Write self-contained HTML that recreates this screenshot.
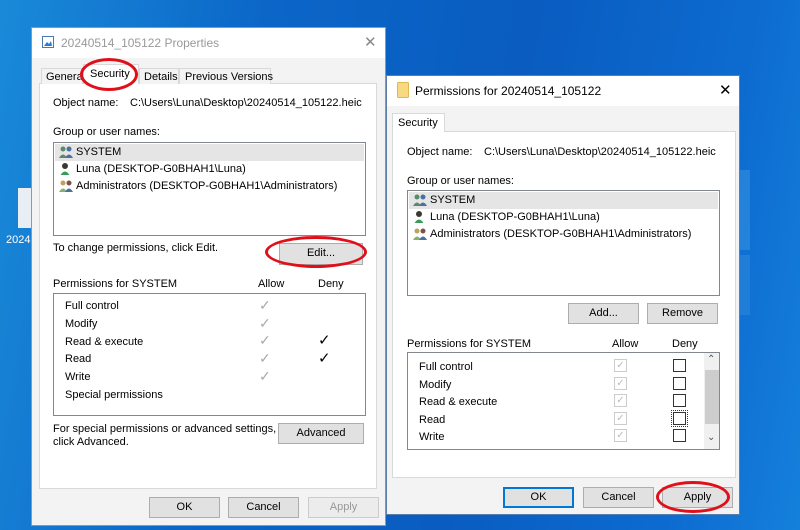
<!DOCTYPE html>
<html><head><style>
*{margin:0;padding:0;box-sizing:border-box}
body{width:800px;height:530px;overflow:hidden;position:relative;font-family:"Liberation Sans",sans-serif;font-size:11px;color:#000;
background:linear-gradient(100deg,#1a8ad8 0%,#0b66c8 30%,#0a5cc0 60%,#0d6bd0 85%,#1580dc 100%)}
.a{position:absolute;white-space:nowrap}
.win{position:absolute;background:#f3f3f3;border:1px solid #7a9cc0}
.tb{position:absolute;left:0;right:0;top:0;background:#fff}
.panel{position:absolute;background:#fff;border:1px solid #d9d9d9}
.list{position:absolute;background:#fff;border:1px solid #828790}
.btn{position:absolute;background:#e1e1e1;border:1px solid #adadad;text-align:center;line-height:19px}
.ell{position:absolute;border:3px solid #e0101a;border-radius:50%}
.ck{position:absolute;width:13px;height:13px;border:1px solid #333;background:#fff}
.gk{position:absolute;width:13px;height:13px;border:1px solid #ccc;background:#fff;color:#bbb;font-size:10px;line-height:11px;text-align:center}
.ico{position:absolute;width:14px;height:12px}
</style></head><body>
<div class="a" style="left:18px;top:188px;width:14px;height:40px;background:#e8eef4"></div>
<div class="a" style="left:6px;top:234px;color:#fff;font-size:11px">2024</div>
<div class="a" style="left:740px;top:170px;width:10px;height:80px;background:#3a96e4;opacity:.5"></div>
<div class="a" style="left:740px;top:255px;width:10px;height:60px;background:#3a92e0;opacity:.4"></div>

<!-- Window 1 -->
<div class="win" style="left:31px;top:27px;width:355px;height:499px">
 <div class="tb" style="height:30px"></div>
 <svg class="a" style="left:10px;top:8px" width="12" height="12"><rect x="0.5" y="0.5" width="11" height="11" fill="#fff" stroke="#4a7ab0"/><path d="M2 10 L5 6 L7 8 L9 5 L10 10Z" fill="#2a7ad0"/></svg>
 <div class="a" style="left:29px;top:8px;color:#999;font-size:12px">20240514_105122 Properties</div>
 <div class="a" style="left:332px;top:5px;color:#888;font-size:15px">✕</div>
 <div class="panel" style="left:7px;top:55px;width:338px;height:406px"></div>
 <div class="a" style="left:9px;top:40px;width:42px;height:16px;border:1px solid #d9d9d9;border-bottom:none;background:#f3f3f3;padding:2px 4px">General</div>
 <div class="a" style="left:51px;top:36px;width:56px;height:20px;border:1px solid #d9d9d9;border-bottom:none;background:#fff;padding:3px 6px">Security</div>
 <div class="a" style="left:107px;top:40px;width:40px;height:16px;border:1px solid #d9d9d9;border-bottom:none;background:#f3f3f3;padding:2px 4px">Details</div>
 <div class="a" style="left:147px;top:40px;width:92px;height:16px;border:1px solid #d9d9d9;border-bottom:none;background:#f3f3f3;padding:2px 5px">Previous Versions</div>
 <div class="a" style="left:21px;top:69px">Object name:</div>
 <div class="a" style="left:98px;top:69px">C:\Users\Luna\Desktop\20240514_105122.heic</div>
 <div class="a" style="left:21px;top:98px">Group or user names:</div>
 <div class="list" style="left:21px;top:114px;width:313px;height:94px">
  <div class="a" style="left:1px;top:1px;width:309px;height:17px;background:#e5e5e5"></div>
  <svg class="ico" style="left:5px;top:3px"><circle cx="4" cy="3" r="2.5" fill="#5a8a6a"/><path d="M0 12 Q4 5 8 12Z" fill="#5a8a6a"/><circle cx="10" cy="3" r="2.5" fill="#4a70a0"/><path d="M6 12 Q10 5 14 12Z" fill="#4a70a0"/></svg>
  <div class="a" style="left:22px;top:3px">SYSTEM</div>
  <svg class="ico" style="left:5px;top:20px"><circle cx="6" cy="3" r="3" fill="#3a3a30"/><path d="M1 13 Q6 4 11 13Z" fill="#3a9a5a"/></svg>
  <div class="a" style="left:22px;top:20px">Luna (DESKTOP-G0BHAH1\Luna)</div>
  <svg class="ico" style="left:5px;top:37px"><circle cx="4" cy="3" r="2.5" fill="#c0a060"/><path d="M0 12 Q4 5 8 12Z" fill="#8ab070"/><circle cx="10" cy="3" r="2.5" fill="#805040"/><path d="M6 12 Q10 5 14 12Z" fill="#4a70a0"/></svg>
  <div class="a" style="left:22px;top:37px">Administrators (DESKTOP-G0BHAH1\Administrators)</div>
 </div>
 <div class="a" style="left:21px;top:214px">To change permissions, click Edit.</div>
 <div class="btn" style="left:247px;top:215px;width:84px;height:22px">Edit...</div>
 <div class="a" style="left:21px;top:250px">Permissions for SYSTEM</div>
 <div class="a" style="left:226px;top:250px">Allow</div>
 <div class="a" style="left:286px;top:250px">Deny</div>
 <div class="list" style="left:21px;top:265px;width:313px;height:123px">
  <div class="a" style="left:11px;top:6px">Full control</div>
  <div class="a" style="left:11px;top:24px">Modify</div>
  <div class="a" style="left:11px;top:42px">Read &amp; execute</div>
  <div class="a" style="left:11px;top:59px">Read</div>
  <div class="a" style="left:11px;top:77px">Write</div>
  <div class="a" style="left:11px;top:95px">Special permissions</div>
  <div class="a" style="left:205px;top:3px;color:#aaa;font-size:14px;line-height:17.7px">✓<br>✓<br>✓<br>✓<br>✓</div>
  <div class="a" style="left:264px;top:38px;color:#000;font-size:15px;line-height:17.7px">✓<br>✓</div>
 </div>
 <div class="a" style="left:21px;top:395px;line-height:13px">For special permissions or advanced settings,<br>click Advanced.</div>
 <div class="btn" style="left:246px;top:395px;width:86px;height:21px">Advanced</div>
 <div class="btn" style="left:117px;top:469px;width:71px;height:21px">OK</div>
 <div class="btn" style="left:196px;top:469px;width:71px;height:21px">Cancel</div>
 <div class="btn" style="left:276px;top:469px;width:71px;height:21px;color:#999;background:#ececec;border-color:#ccc">Apply</div>
</div>
<div class="ell" style="left:80px;top:58px;width:58px;height:33px"></div>
<div class="ell" style="left:265px;top:236px;width:102px;height:32px"></div>

<!-- Window 2 -->
<div class="win" style="left:386px;top:75px;width:354px;height:440px;border-color:#5a7ea8">
 <div class="tb" style="height:30px"></div>
 <svg class="a" style="left:10px;top:6px" width="12" height="16"><rect x="0.5" y="0.5" width="11" height="15" rx="1" fill="#f8d880" stroke="#e0b850"/></svg>
 <div class="a" style="left:28px;top:8px;font-size:12px">Permissions for 20240514_105122</div>
 <div class="a" style="left:332px;top:5px;font-size:15px">✕</div>
 <div class="panel" style="left:5px;top:55px;width:344px;height:347px"></div>
 <div class="a" style="left:5px;top:37px;width:53px;height:19px;border:1px solid #d9d9d9;border-bottom:none;background:#fff;padding:3px 5px">Security</div>
 <div class="a" style="left:20px;top:70px">Object name:</div>
 <div class="a" style="left:97px;top:70px">C:\Users\Luna\Desktop\20240514_105122.heic</div>
 <div class="a" style="left:20px;top:99px">Group or user names:</div>
 <div class="list" style="left:20px;top:114px;width:313px;height:106px">
  <div class="a" style="left:1px;top:1px;width:309px;height:17px;background:#e5e5e5"></div>
  <svg class="ico" style="left:5px;top:3px"><circle cx="4" cy="3" r="2.5" fill="#5a8a6a"/><path d="M0 12 Q4 5 8 12Z" fill="#5a8a6a"/><circle cx="10" cy="3" r="2.5" fill="#4a70a0"/><path d="M6 12 Q10 5 14 12Z" fill="#4a70a0"/></svg>
  <div class="a" style="left:22px;top:3px">SYSTEM</div>
  <svg class="ico" style="left:5px;top:20px"><circle cx="6" cy="3" r="3" fill="#3a3a30"/><path d="M1 13 Q6 4 11 13Z" fill="#3a9a5a"/></svg>
  <div class="a" style="left:22px;top:20px">Luna (DESKTOP-G0BHAH1\Luna)</div>
  <svg class="ico" style="left:5px;top:37px"><circle cx="4" cy="3" r="2.5" fill="#c0a060"/><path d="M0 12 Q4 5 8 12Z" fill="#8ab070"/><circle cx="10" cy="3" r="2.5" fill="#805040"/><path d="M6 12 Q10 5 14 12Z" fill="#4a70a0"/></svg>
  <div class="a" style="left:22px;top:37px">Administrators (DESKTOP-G0BHAH1\Administrators)</div>
 </div>
 <div class="btn" style="left:181px;top:227px;width:71px;height:21px">Add...</div>
 <div class="btn" style="left:260px;top:227px;width:71px;height:21px">Remove</div>
 <div class="a" style="left:20px;top:262px">Permissions for SYSTEM</div>
 <div class="a" style="left:225px;top:262px">Allow</div>
 <div class="a" style="left:285px;top:262px">Deny</div>
 <div class="list" style="left:20px;top:276px;width:313px;height:98px;overflow:hidden">
  <div class="a" style="left:11px;top:8px">Full control</div>
  <div class="a" style="left:11px;top:26px">Modify</div>
  <div class="a" style="left:11px;top:43px">Read &amp; execute</div>
  <div class="a" style="left:11px;top:61px">Read</div>
  <div class="a" style="left:11px;top:78px">Write</div>
  <div class="gk" style="left:206px;top:6px">✓</div><div class="gk" style="left:206px;top:24px">✓</div><div class="gk" style="left:206px;top:41px">✓</div><div class="gk" style="left:206px;top:59px">✓</div><div class="gk" style="left:206px;top:76px">✓</div>
  <div class="ck" style="left:265px;top:6px"></div><div class="ck" style="left:265px;top:24px"></div><div class="ck" style="left:265px;top:41px"></div><div class="ck" style="left:265px;top:59px;outline:1px dotted #333;outline-offset:1px"></div><div class="ck" style="left:265px;top:76px"></div>
  <div class="a" style="left:296px;top:0;width:16px;height:96px;background:#f0f0f0"></div>
  <div class="a" style="left:299px;top:1px;font-size:10px;color:#555">⌃</div>
  <div class="a" style="left:297px;top:17px;width:14px;height:54px;background:#cdcdcd"></div>
  <div class="a" style="left:299px;top:79px;font-size:10px;color:#555">⌄</div>
 </div>
 <div class="btn" style="left:116px;top:411px;width:71px;height:21px;border:2px solid #0078d7;line-height:17px">OK</div>
 <div class="btn" style="left:196px;top:411px;width:71px;height:21px">Cancel</div>
 <div class="btn" style="left:275px;top:411px;width:71px;height:21px">Apply</div>
</div>
<div class="ell" style="left:656px;top:481px;width:74px;height:32px"></div>
</body></html>
